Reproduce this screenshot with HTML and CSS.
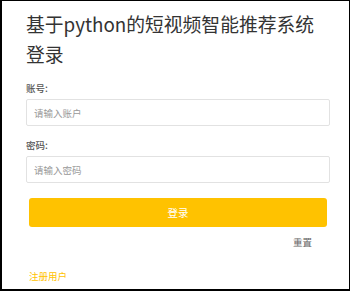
FILE: index.html
```html
<!DOCTYPE html>
<html>
  <head>
    <meta charset="utf-8" />
    <title>登录</title>
    <link rel="stylesheet" href="styles.css">
  </head>
  <body>
    <div class="frame">
      <h1 class="title">基于python的短视频智能推荐系统<br>登录</h1>

      <!-- 登录表单 -->
      <form class="login-form">
        <label class="field-label" for="username">账号:</label>
        <input class="field-input" type="text" id="username" placeholder="请输入账户" />

        <label class="field-label second" for="password">密码:</label>
        <input class="field-input" type="password" id="password" placeholder="请输入密码" />

        <button type="button" class="btn-login">登录</button>
        <div class="reset-row">
          <button type="reset" class="btn-reset">重置</button>
        </div>
      </form>

      <a class="register-link" href="#">注册用户</a>
    </div>
  </body>
</html>
```

FILE: styles.css
```css
* {
  box-sizing: border-box;
}
body {
  margin: 0;
  font-family: "Noto Sans CJK SC", "Noto Sans", sans-serif;
  background-color: #fff;
}
.frame {
  width: 350px;
  height: 291px;
  padding: 8px 19px 0 24px;
  border: 2px solid #000;
  border-top-width: 1px;
  border-right-width: 1px;
}
.title {
  margin: 0;
  font-size: 18.8px;
  font-weight: normal;
  line-height: 30px;
  color: #333;
}
.login-form {
  margin-top: 12px;
}
.field-label {
  display: block;
  font-size: 9.5px;
  line-height: 14px;
  color: #555;
  font-weight: 500;
  margin-bottom: 4px;
}
.field-label.second {
  margin-top: 12px;
}
.field-input {
  display: block;
  width: 100%;
  height: 27px;
  padding: 0 7px;
  border: 1px solid #e2e2e2;
  border-radius: 2px;
  font-family: inherit;
  font-size: 9.5px;
  color: #333;
}
.field-input::placeholder {
  color: #999;
}
.btn-login {
  display: block;
  width: calc(100% - 6px);
  height: 29px;
  margin: 15px 3px 0;
  border: none;
  border-radius: 3px;
  background-color: #ffc200;
  color: #fff;
  font-family: inherit;
  font-size: 10.5px;
}
.reset-row {
  display: flex;
  justify-content: flex-end;
  padding-right: 18px;
  margin-top: 8px;
}
.btn-reset {
  padding: 0;
  border: none;
  background: none;
  font-family: inherit;
  font-size: 9.5px;
  line-height: 14px;
  color: #666;
}
.register-link {
  display: inline-block;
  margin-top: 20px;
  margin-left: 3px;
  font-size: 9.5px;
  line-height: 14px;
  color: #ffc200;
  text-decoration: none;
}
```
